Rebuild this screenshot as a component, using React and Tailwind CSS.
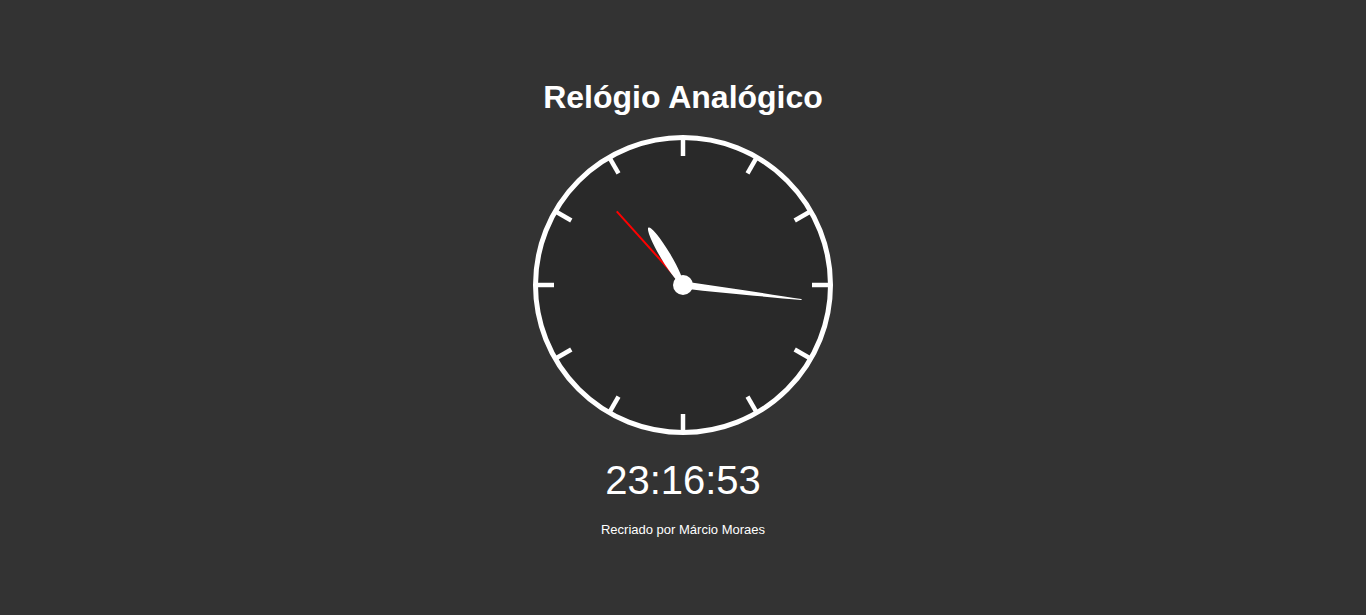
import { useMemo } from "react";

const HOUR_ANGLE = 329;
const MINUTE_ANGLE = 97;
const SECOND_ANGLE = 318;

const Clock = () => {
  // 12 marcas ao redor do mostrador
  const ticks = useMemo(
    () =>
      Array.from({ length: 12 }, (_, i) => {
        const a = (i * 30 * Math.PI) / 180;
        const r1 = 129;
        const r2 = 146;
        return {
          x1: 150 + r1 * Math.sin(a),
          y1: 150 - r1 * Math.cos(a),
          x2: 150 + r2 * Math.sin(a),
          y2: 150 - r2 * Math.cos(a),
        };
      }),
    []
  );

  return (
    <svg width="300" height="300" viewBox="0 0 300 300" className="block">
      <circle cx="150" cy="150" r="147.5" fill="#292929" stroke="#ffffff" strokeWidth="5" />
      {ticks.map((t, i) => (
        <line key={i} x1={t.x1} y1={t.y1} x2={t.x2} y2={t.y2} stroke="#ffffff" strokeWidth="4.5" />
      ))}
      {/* segundos */}
      <line
        x1="150"
        y1="150"
        x2="150"
        y2="51"
        stroke="#ff0000"
        strokeWidth="2"
        transform={`rotate(${SECOND_ANGLE} 150 150)`}
      />
      {/* horas */}
      <ellipse
        cx="150"
        cy="116"
        rx="5"
        ry="33"
        fill="#ffffff"
        transform={`rotate(${HOUR_ANGLE} 150 150)`}
      />
      {/* minutos */}
      <path
        d="M146.5,150 C147,110 148.6,62 149.5,31 Q150,29.5 150.5,31 C151.4,62 153,110 153.5,150 Z"
        fill="#ffffff"
        transform={`rotate(${MINUTE_ANGLE} 150 150)`}
      />
      <circle cx="150" cy="150" r="10" fill="#ffffff" />
    </svg>
  );
};

const App = () => {
  return (
    <div
      className="h-screen w-full bg-[#333333] flex flex-col items-center justify-center text-white"
      style={{ fontFamily: '"Liberation Sans", Arial, sans-serif' }}
    >
      <h1 className="text-[32px] leading-[36px] font-bold">Relógio Analógico</h1>
      <div className="mt-[20px]">
        <Clock />
      </div>
      <div className="mt-[22px] text-[40px] leading-[46px]">23:16:53</div>
      <p className="mt-[19px] text-[13px] leading-[15px]">Recriado por Márcio Moraes</p>
    </div>
  );
};

export default App;
